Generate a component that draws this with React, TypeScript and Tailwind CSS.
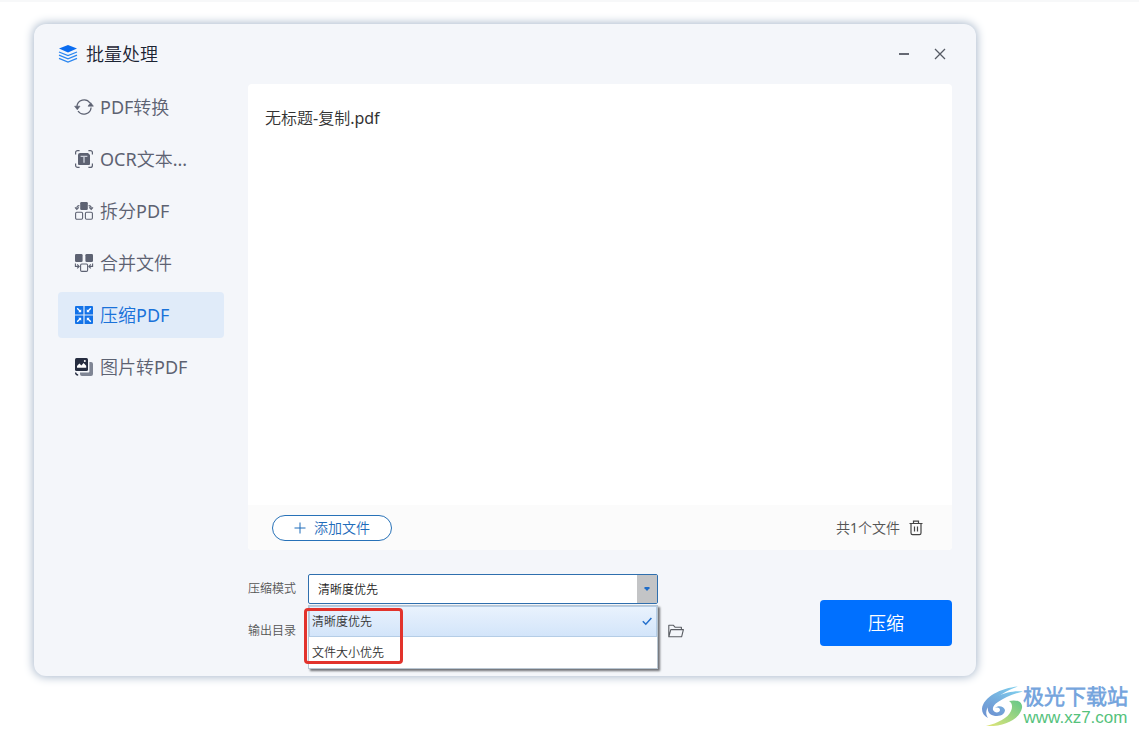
import React, { useState } from "react";

type IconProps = { className?: string };

const ConvertIcon = ({ className }: IconProps) => (
  <svg className={className} viewBox="0 0 20 20" fill="none" stroke="currentColor" strokeWidth="1.3">
    <path d="M2.9 9.5A7.2 7.2 0 0 1 16 6M17.1 10.5A7.2 7.2 0 0 1 4 14" />
    <path d="M0.6 9.2h5.4L3.3 12.8zM14 9.2h5.4L16.7 5.6z" fill="currentColor" strokeWidth="0.6" strokeLinejoin="round" />
  </svg>
);

const OcrIcon = ({ className }: IconProps) => (
  <svg className={className} viewBox="0 0 20 20" fill="none" stroke="currentColor" strokeWidth="1.2">
    <path d="M1.6 5.5V3.6a2 2 0 0 1 2-2h2M14.4 1.6h2a2 2 0 0 1 2 2v1.9M18.4 14.5v1.9a2 2 0 0 1-2 2h-2M5.6 18.4h-2a2 2 0 0 1-2-2v-1.9" />
    <path d="M6 4h8l2 2v9a1 1 0 0 1-1 1H5a1 1 0 0 1-1-1V6a2 2 0 0 1 2-2z" fill="currentColor" stroke="none" />
    <path d="M6.6 7.4h6.8M10 7.4v6.4" stroke="#c9cdd8" strokeWidth="1.4" />
  </svg>
);

const SplitIcon = ({ className }: IconProps) => (
  <svg className={className} viewBox="0 0 20 20" fill="none" stroke="currentColor" strokeWidth="1.1">
    <rect x="6.2" y="1" width="7.6" height="8" rx="1.2" fill="currentColor" stroke="none" />
    <rect x="1.6" y="11.2" width="7" height="7" rx="1.2" />
    <rect x="11.4" y="11.2" width="7" height="7" rx="1.2" />
    <path d="M5.4 4.6C3.4 4.6 2.8 5.6 2.8 7M1 6.4l1.8 2 2-2M14.6 4.6c2 0 2.6 1 2.6 2.4M19 6.4l-1.8 2-2-2" />
  </svg>
);

const MergeIcon = ({ className }: IconProps) => (
  <svg className={className} viewBox="0 0 20 20" fill="none" stroke="currentColor" strokeWidth="1.1">
    <rect x="1" y="1" width="7.6" height="8" rx="1.2" fill="currentColor" stroke="none" />
    <rect x="11.4" y="1" width="7.6" height="8" rx="1.2" fill="currentColor" stroke="none" />
    <rect x="6.6" y="11" width="7" height="7.4" rx="1.2" />
    <path d="M1.4 10.6v2.8h3M3.2 11.4l2 2-2 2M18.6 10.6v2.8h-3M16.8 11.4l-2 2 2 2" />
  </svg>
);

const CompressIcon = ({ className }: IconProps) => (
  <svg className={className} viewBox="0 0 20 20" fill="none">
    <path
      fill="#1272e8"
      d="M2 1h7.4v8.4H1V2a1 1 0 0 1 1-1zM10.6 1H18a1 1 0 0 1 1 1v7.4h-8.4zM1 10.6h8.4V19H2a1 1 0 0 1-1-1zM10.6 10.6H19V18a1 1 0 0 1-1 1h-7.4z"
    />
    <path stroke="#fff" strokeWidth="1.3" d="M3.2 3.2l3 3M16.8 3.2l-3 3M3.2 16.8l3-3M16.8 16.8l-3-3" />
    <path fill="#fff" d="M7.2 4.2v3H4.2zM12.8 4.2v3h3zM7.2 15.8v-3H4.2zM12.8 15.8v-3h3z" />
  </svg>
);

const ImageIcon = ({ className }: IconProps) => (
  <svg className={className} viewBox="0 0 20 20" fill="none">
    <path fill="#7f8594" d="M15.4 5H17a2 2 0 0 1 2 2v10a2 2 0 0 1-2 2H8a2 2 0 0 1-2-2v-1.6h8.4a1 1 0 0 0 1-1z" />
    <rect x="1" y="1" width="13" height="13" rx="1.5" fill="#262d40" />
    <path d="M3 10.8V9l2.4-2.4 2 2L9.6 6l2.6 2.8v2z" fill="#fff" />
    <circle cx="10.8" cy="4" r="1" fill="#fff" />
    <path d="M1.6 15.6c0 1.6.8 2.4 2.6 2.6" stroke="#262d40" strokeWidth="1.3" />
  </svg>
);

const navItems = [
  { id: "convert", label: "PDF转换", Icon: ConvertIcon },
  { id: "ocr", label: "OCR文本...", Icon: OcrIcon },
  { id: "split", label: "拆分PDF", Icon: SplitIcon },
  { id: "merge", label: "合并文件", Icon: MergeIcon },
  { id: "compress", label: "压缩PDF", Icon: CompressIcon },
  { id: "image", label: "图片转PDF", Icon: ImageIcon },
];

const modes = ["清晰度优先", "文件大小优先"];

const TitleBar = () => (
  <header className="flex h-15 items-center justify-between pr-[26px] pl-6">
    <div className="flex items-center gap-2">
      <svg className="size-5" viewBox="0 0 20 20" fill="none">
        <path d="M10 1l9 3.6-9 3.9-9-3.9z" fill="#0a6cf0" />
        <path d="M1 8l9 3.6L19 8M1 11.2l9 3.6 9-3.6M1 14.4L10 18l9-3.6" stroke="#2b86f0" strokeWidth="1.3" />
      </svg>
      <h1 className="text-lg text-[#1c2433]">批量处理</h1>
    </div>
    <div className="flex items-center gap-4 text-[#555a64]">
      <button type="button" aria-label="最小化" className="flex size-5 items-center justify-center">
        <svg className="size-4" viewBox="0 0 16 16" stroke="currentColor" strokeWidth="1.8">
          <path d="M3 8h10" />
        </svg>
      </button>
      <button type="button" aria-label="关闭" className="flex size-5 items-center justify-center">
        <svg className="size-4" viewBox="0 0 16 16" stroke="currentColor" strokeWidth="1.3">
          <path d="M3 3l10 10M13 3L3 13" />
        </svg>
      </button>
    </div>
  </header>
);

type SidebarProps = {
  active: string;
  onSelect: (id: string) => void;
};

const Sidebar = ({ active, onSelect }: SidebarProps) => (
  <nav className="flex w-[166px] shrink-0 flex-col gap-1.5">
    {navItems.map(({ id, label, Icon }) => (
      <button
        key={id}
        type="button"
        onClick={() => onSelect(id)}
        className={`flex h-[46px] items-center gap-1.5 rounded pl-4 text-lg ${
          id === active ? "bg-[#e0ebf9] text-[#1a72d9]" : "text-[#5d6272]"
        }`}
      >
        <Icon className="size-5 shrink-0" />
        {label}
      </button>
    ))}
  </nav>
);

const FilePanel = () => (
  <section className="overflow-hidden rounded bg-white">
    <ul className="h-[421px] px-[17px] pt-[22px] text-base leading-6 text-[#333333]">
      <li>无标题-复制.pdf</li>
    </ul>
    <div className="flex h-[45px] items-center justify-between bg-[#fbfbfb] pr-7 pl-6">
      <button
        type="button"
        className="flex h-[26px] w-[120px] items-center justify-center gap-2 rounded-full border border-[#2872b8] bg-white text-sm text-[#1f6cba]"
      >
        <svg className="size-3" viewBox="0 0 12 12" stroke="currentColor">
          <path d="M6 0.5v11M0.5 6h11" />
        </svg>
        添加文件
      </button>
      <div className="flex items-center gap-2 text-sm text-[#555555]">
        <span>共1个文件</span>
        <button type="button" aria-label="清空">
          <svg className="size-4" viewBox="0 0 16 16" fill="none" stroke="#444444" strokeWidth="1.2">
            <path d="M1.5 3.5h13M5.5 3.5V1.2h5v2.3M3 3.5v9.6a1.6 1.6 0 0 0 1.6 1.6h6.8a1.6 1.6 0 0 0 1.6-1.6V3.5M6.5 6.5v5M9.5 6.5v5" />
          </svg>
        </button>
      </div>
    </div>
  </section>
);

const OptionsForm = () => {
  const [mode, setMode] = useState(modes[0]);

  return (
    <form className="flex items-end justify-between pt-6" onSubmit={(e) => e.preventDefault()}>
      <div className="flex flex-col gap-3 text-xs text-[#555555]">
        <div className="flex h-[30px] items-center gap-3">
          <label htmlFor="mode">压缩模式</label>
          <div className="relative w-[350px]">
            <select
              id="mode"
              value={mode}
              onChange={(e) => setMode(e.target.value)}
              className="block h-[30px] w-full appearance-none rounded-xs border border-[#2f6fae] bg-white pt-px pl-[9px] text-xs text-[#222222] outline-none"
            >
              {modes.map((m) => (
                <option key={m}>{m}</option>
              ))}
            </select>
            <span className="pointer-events-none absolute top-px right-px bottom-px flex w-5 items-center justify-center bg-[#c3c4c6]">
              <svg className="h-1.5 w-2" viewBox="0 0 8 6" fill="#1f6cc8">
                <path d="M1.5 1h5v1.2L4 5 1.5 2.2z" />
              </svg>
            </span>
            <ul
              role="listbox"
              aria-label="压缩模式"
              className="absolute top-full left-0 z-10 mt-px w-full border border-[#b9c6d2] bg-white text-xs text-[#333333] shadow-[2px_2px_2px_#707276]"
            >
              {modes.map((m) => (
                <li
                  key={m}
                  role="option"
                  aria-selected={m === mode}
                  onClick={() => setMode(m)}
                  className={`flex h-[31px] items-center justify-between border pr-1 pl-0.5 ${
                    m === mode
                      ? "border-[#b5cde6] bg-linear-to-b from-[#e9f2fd] to-[#d3e5fa]"
                      : "border-transparent"
                  }`}
                >
                  {m}
                  {m === mode && (
                    <svg className="size-2.5" viewBox="0 0 10 10" fill="none" stroke="#2470cc" strokeWidth="1.5">
                      <path d="M0.8 4.2l3 3L9.4 1" />
                    </svg>
                  )}
                </li>
              ))}
            </ul>
            <div className="pointer-events-none absolute top-[34px] -left-1 z-20 h-14 w-[99px] rounded border-3 border-[#e2332c]" />
          </div>
        </div>
        <div className="flex h-[30px] items-center gap-3">
          <label htmlFor="output">输出目录</label>
          <div className="flex items-center gap-2.5">
            <input id="output" className="h-[30px] w-[350px] border border-[#d5d8de] bg-white px-2" />
            <button type="button" aria-label="浏览">
              <svg className="size-4" viewBox="0 0 16 16" fill="none" stroke="#5a5d63" strokeWidth="1.1">
                <path d="M0.8 13.8V2.2h4.4l1.8 2h6.4v2.4M0.8 13.8l2-7.2h12.6l-1.8 7.2z" strokeLinejoin="round" />
              </svg>
            </button>
          </div>
        </div>
      </div>
      <button type="submit" className="h-[46px] w-[132px] rounded bg-[#0070ff] text-lg text-white">
        压缩
      </button>
    </form>
  );
};

const SiteMark = () => (
  <footer className="flex items-center justify-end pt-2 pr-[11px]">
    <svg className="h-11 w-[42px]" viewBox="0 0 42 44">
      <defs>
        <linearGradient id="blue" x1="1" y1="0" x2="0" y2="1">
          <stop offset="0" stopColor="#7fd0ee" />
          <stop offset="1" stopColor="#6d90d0" />
        </linearGradient>
        <linearGradient id="green" x1="1" y1="0" x2="0" y2="1">
          <stop offset="0" stopColor="#62c789" />
          <stop offset="1" stopColor="#e3e679" />
        </linearGradient>
      </defs>
      <path d="M37 2.5C20 4 2 13 1 25c0 4 2 7 6 9-3-5-2-9 2-13C15 13 26 6 37 2.5z" fill="url(#blue)" />
      <path d="M42 7.5C27 6 9 13 7 23c-1 6 3 9 9 9 5 0 8-3 8-6-1-4-7-5-10-2 3-1 5 0 5 2s-3 3-5 2c-4-2-2-7 3-10 6-4 14-8 25-10.500z" fill="url(#blue)" />
      <path d="M28 17c8-2 14 1 13 7-2 11-18 19-36 18 12-3 22-8 25-15 2-5 1-8-2-10z" fill="url(#green)" />
    </svg>
    <div className="flex flex-col items-center">
      <span className="text-[21px] leading-6 font-bold text-[#76a5dd]">极光下载站</span>
      <a
        href="#"
        className="font-['Liberation_Sans',sans-serif] text-[17px] leading-5 text-[#55c27c]"
      >
        www.xz7.com
      </a>
    </div>
  </footer>
);

const App = () => {
  const [active, setActive] = useState("compress");

  return (
    <div className="min-h-screen border-t-2 border-[#f7f8f9] bg-white pt-[22px] font-['Noto_Sans','Noto_Sans_CJK_SC_DemiLight','Noto_Sans_CJK_SC',sans-serif]">
      <main className="mr-[163px] ml-[34px] rounded-xl bg-[#f4f6fa] pb-[30px] shadow-[0_0_10px_1px_#a9b8cb]">
        <TitleBar />
        <div className="flex gap-6 px-6">
          <Sidebar active={active} onSelect={setActive} />
          <div className="min-w-0 flex-1">
            <FilePanel />
            <OptionsForm />
          </div>
        </div>
      </main>
      <SiteMark />
    </div>
  );
};

export default App;
